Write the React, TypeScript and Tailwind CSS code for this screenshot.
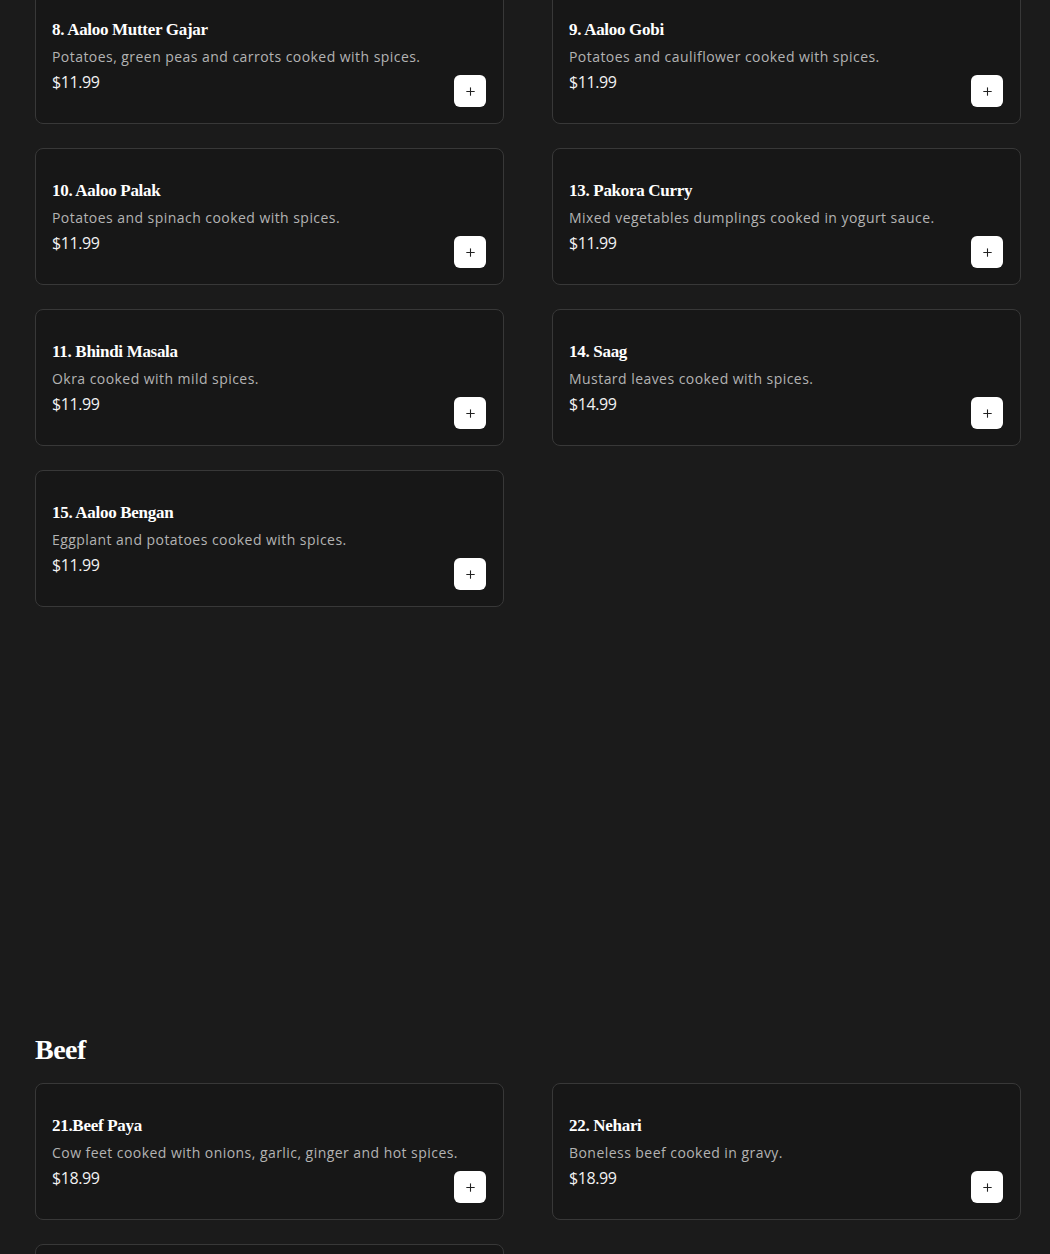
import { Plus } from "lucide-react";

type Dish = {
  name: string;
  desc: string;
  price: string;
};

const vegetables: Dish[] = [
  { name: "8. Aaloo Mutter Gajar", desc: "Potatoes, green peas and carrots cooked with spices.", price: "$11.99" },
  { name: "9. Aaloo Gobi", desc: "Potatoes and cauliflower cooked with spices.", price: "$11.99" },
  { name: "10. Aaloo Palak", desc: "Potatoes and spinach cooked with spices.", price: "$11.99" },
  { name: "13. Pakora Curry", desc: "Mixed vegetables dumplings cooked in yogurt sauce.", price: "$11.99" },
  { name: "11. Bhindi Masala", desc: "Okra cooked with mild spices.", price: "$11.99" },
  { name: "14. Saag", desc: "Mustard leaves cooked with spices.", price: "$14.99" },
  { name: "15. Aaloo Bengan", desc: "Eggplant and potatoes cooked with spices.", price: "$11.99" },
];

const beef: Dish[] = [
  { name: "21.Beef Paya", desc: "Cow feet cooked with onions, garlic, ginger and hot spices.", price: "$18.99" },
  { name: "22. Nehari", desc: "Boneless beef cooked in gravy.", price: "$18.99" },
];

const titleFont = { fontFamily: '"Liberation Serif", "DejaVu Serif", serif' };

const Card = ({ dish }: { dish: Dish }) => {
  return (
    <div className="h-[137px] rounded-lg border border-[#383838] bg-[#171717] pl-4 pr-[17px] pt-[30px] pb-4 flex justify-between items-start">
      <div className="flex-1 min-w-0">
        <h3
          className="text-[17px] leading-6 font-bold tracking-[-0.3px] text-white whitespace-nowrap"
          style={titleFont}
        >
          {dish.name}
        </h3>
        <p className="mt-[5px] text-[14px] leading-5 tracking-[0.45px] text-[#b3b3b3] whitespace-nowrap">
          {dish.desc}
        </p>
        <p className="mt-[3px] text-[16px] leading-6 tracking-[-0.4px] text-[#f2f2f2]">{dish.price}</p>
      </div>
      <button className="mt-[57px] w-8 h-8 shrink-0 rounded-md bg-white flex items-center justify-center text-[#222]">
        <Plus size={13} strokeWidth={2} />
      </button>
    </div>
  );
};

const App = () => {
  return (
    <div
      className="h-[1254px] bg-[#1b1b1b] pl-[35px] pr-[29px] overflow-hidden"
      style={{ fontFamily: '"Open Sans", "Liberation Sans", sans-serif' }}
    >
      <div className="-mt-[13px] grid grid-cols-2 gap-x-12 gap-y-6">
        {vegetables.map((dish, index) => (
          <Card dish={dish} key={index} />
        ))}
      </div>
      <div className="mt-[425px]">
        <h2
          className="text-[28px] leading-9 font-bold text-white tracking-[-0.5px]"
          style={titleFont}
        >
          Beef
        </h2>
        <div className="mt-[15px] grid grid-cols-2 gap-x-12 gap-y-6">
          {beef.map((dish, index) => (
            <Card dish={dish} key={index} />
          ))}
          <div className="h-[137px] rounded-lg border border-[#383838] bg-[#171717]" />
        </div>
      </div>
    </div>
  );
};

export default App;
